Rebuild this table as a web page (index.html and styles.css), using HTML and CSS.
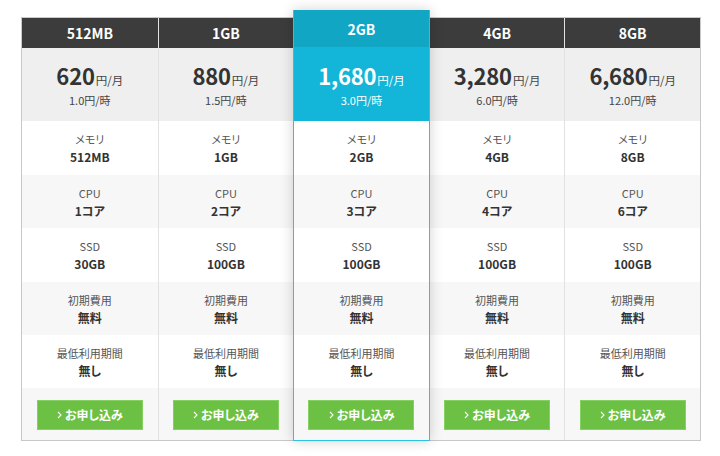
FILE: index.html
```html
<!DOCTYPE html>
<html lang="ja">
<head>
<meta charset="utf-8">
<title>料金プラン</title>
<link rel="stylesheet" href="styles.css">
</head>
<body>
<div class="page">
  <div class="plans">
    <div class="plan">
      <div class="plan-head">512MB</div>
      <div class="plan-price"><div class="month"><span class="num">620</span><span class="unit">円/月</span></div><div class="hour">1.0円/時</div></div>
      <div class="row"><span class="label">メモリ</span><span class="value">512MB</span></div>
      <div class="row alt"><span class="label">CPU</span><span class="value">1コア</span></div>
      <div class="row"><span class="label">SSD</span><span class="value">30GB</span></div>
      <div class="row alt"><span class="label">初期費用</span><span class="value">無料</span></div>
      <div class="row"><span class="label">最低利用期間</span><span class="value">無し</span></div>
      <div class="row-btn"><a class="btn" href="#"><svg class="chev" width="5" height="8" viewBox="0 0 5 8"><path d="M1 1l3 3-3 3" fill="none" stroke="#fff" stroke-width="1.1"/></svg>お申し込み</a></div>
    </div>
    <div class="plan">
      <div class="plan-head">1GB</div>
      <div class="plan-price"><div class="month"><span class="num">880</span><span class="unit">円/月</span></div><div class="hour">1.5円/時</div></div>
      <div class="row"><span class="label">メモリ</span><span class="value">1GB</span></div>
      <div class="row alt"><span class="label">CPU</span><span class="value">2コア</span></div>
      <div class="row"><span class="label">SSD</span><span class="value">100GB</span></div>
      <div class="row alt"><span class="label">初期費用</span><span class="value">無料</span></div>
      <div class="row"><span class="label">最低利用期間</span><span class="value">無し</span></div>
      <div class="row-btn"><a class="btn" href="#"><svg class="chev" width="5" height="8" viewBox="0 0 5 8"><path d="M1 1l3 3-3 3" fill="none" stroke="#fff" stroke-width="1.1"/></svg>お申し込み</a></div>
    </div>
    <div class="plan featured">
      <div class="plan-head">2GB</div>
      <div class="plan-price"><div class="month"><span class="num">1,680</span><span class="unit">円/月</span></div><div class="hour">3.0円/時</div></div>
      <div class="row"><span class="label">メモリ</span><span class="value">2GB</span></div>
      <div class="row alt"><span class="label">CPU</span><span class="value">3コア</span></div>
      <div class="row"><span class="label">SSD</span><span class="value">100GB</span></div>
      <div class="row alt"><span class="label">初期費用</span><span class="value">無料</span></div>
      <div class="row"><span class="label">最低利用期間</span><span class="value">無し</span></div>
      <div class="row-btn"><a class="btn" href="#"><svg class="chev" width="5" height="8" viewBox="0 0 5 8"><path d="M1 1l3 3-3 3" fill="none" stroke="#fff" stroke-width="1.1"/></svg>お申し込み</a></div>
    </div>
    <div class="plan">
      <div class="plan-head">4GB</div>
      <div class="plan-price"><div class="month"><span class="num">3,280</span><span class="unit">円/月</span></div><div class="hour">6.0円/時</div></div>
      <div class="row"><span class="label">メモリ</span><span class="value">4GB</span></div>
      <div class="row alt"><span class="label">CPU</span><span class="value">4コア</span></div>
      <div class="row"><span class="label">SSD</span><span class="value">100GB</span></div>
      <div class="row alt"><span class="label">初期費用</span><span class="value">無料</span></div>
      <div class="row"><span class="label">最低利用期間</span><span class="value">無し</span></div>
      <div class="row-btn"><a class="btn" href="#"><svg class="chev" width="5" height="8" viewBox="0 0 5 8"><path d="M1 1l3 3-3 3" fill="none" stroke="#fff" stroke-width="1.1"/></svg>お申し込み</a></div>
    </div>
    <div class="plan">
      <div class="plan-head">8GB</div>
      <div class="plan-price"><div class="month"><span class="num">6,680</span><span class="unit">円/月</span></div><div class="hour">12.0円/時</div></div>
      <div class="row"><span class="label">メモリ</span><span class="value">8GB</span></div>
      <div class="row alt"><span class="label">CPU</span><span class="value">6コア</span></div>
      <div class="row"><span class="label">SSD</span><span class="value">100GB</span></div>
      <div class="row alt"><span class="label">初期費用</span><span class="value">無料</span></div>
      <div class="row"><span class="label">最低利用期間</span><span class="value">無し</span></div>
      <div class="row-btn"><a class="btn" href="#"><svg class="chev" width="5" height="8" viewBox="0 0 5 8"><path d="M1 1l3 3-3 3" fill="none" stroke="#fff" stroke-width="1.1"/></svg>お申し込み</a></div>
    </div>
  </div>
</div>
</body>
</html>
```
FILE: styles.css
```css
* { box-sizing: border-box; }
html, body { margin: 0; padding: 0; background: #fff; }
body {
  font-family: "Noto Sans CJK JP", "Noto Sans", sans-serif;
  font-feature-settings: "palt";
  color: #333;
  width: 720px;
  height: 456px;
  overflow: hidden;
}
.page { padding: 17px 19px 0 21px; }
.plans {
  display: grid;
  grid-template-columns: repeat(5, 1fr);
  width: 680px;
  border: 1px solid #c8c8c8;
}
.plan {
  display: flex;
  flex-direction: column;
  border-left: 1px solid #e2e2e2;
  background: #fff;
}
.plan:first-child { border-left: none; }
.plan-head {
  height: 30px;
  background: #3c3c3c;
  color: #fff;
  font-weight: 700;
  font-size: 14px;
  display: flex;
  align-items: center;
  justify-content: center;
}
.plan-price {
  height: 73px;
  background: #efefef;
  display: flex;
  flex-direction: column;
  align-items: center;
  justify-content: center;
  padding-top: 1px;
}
.month { line-height: 26px; white-space: nowrap; }
.num { font-size: 22px; font-weight: 700; color: #333; letter-spacing: -0.2px; }
.unit { font-size: 11.5px; color: #444; margin-left: 1px; }
.hour { font-size: 11px; line-height: 15px; color: #444; }
.row {
  height: 54px;
  display: flex;
  flex-direction: column;
  align-items: center;
  justify-content: center;
  background: #fff;
}
.row.alt { height: 53px; background: #f7f7f7; }
.row:nth-last-child(2) { height: 53px; }
.label { font-size: 11px; line-height: 17px; color: #555; }
.value { font-size: 12px; line-height: 17px; font-weight: 700; color: #333; }
.row-btn {
  height: 52px;
  background: #f7f7f7;
  display: flex;
  align-items: center;
  justify-content: center;
  padding-top: 1px;
}
.btn {
  width: 106px;
  height: 30px;
  background: #6cc144;
  border: 1px solid #86cf63;
  color: #fff;
  text-decoration: none;
  font-size: 12px;
  font-weight: 700;
  display: flex;
  align-items: center;
  justify-content: center;
  gap: 3px;
}
.chev { display: block; margin-top: 1px; }

.featured {
  margin: -8px -1px -1px 0;
  border: 1px solid #2cc3e3;
  border-top: none;
  position: relative;
  z-index: 2;
  box-shadow: 0 0 12px rgba(0,0,0,0.18);
}
.featured .plan-head { height: 37px; background: #12a6c5; }
.featured .plan-price { height: 74px; background: #13b5d8; }
.featured .num, .featured .unit, .featured .hour { color: #fff; }
```
